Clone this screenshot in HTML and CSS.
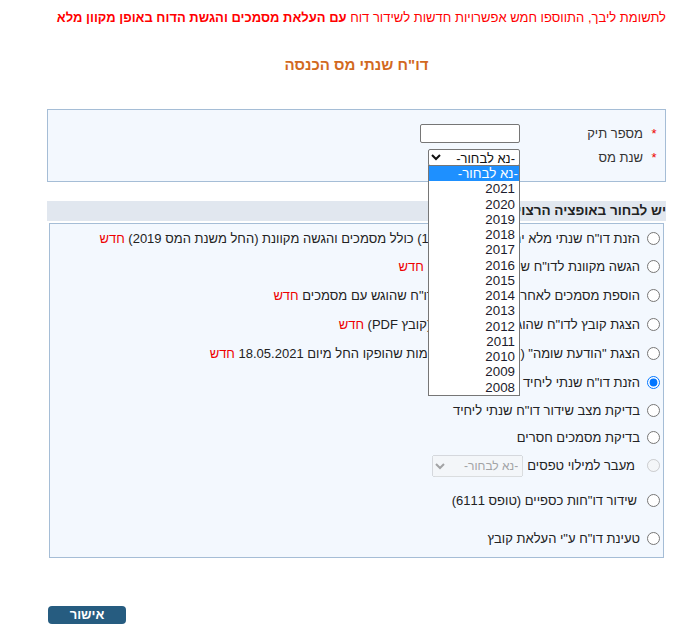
FILE: index.html
```html
<!DOCTYPE html>
<html lang="he" dir="rtl">
<head>
<meta charset="utf-8">
<title>דו"ח שנתי מס הכנסה</title>
<link rel="stylesheet" href="styles.css">
</head>
<body>
<p class="notice">לתשומת ליבך, התווספו חמש אפשרויות חדשות לשידור דוח <b>עם העלאת מסמכים והגשת הדוח באופן מקוון מלא</b></p>
<h1 class="title">דו"ח שנתי מס הכנסה</h1>
<div class="wrap">
  <div class="panel">
    <div class="field">
      <span class="req">*</span>
      <label class="label" for="tik">מספר תיק</label>
      <input class="text-input" id="tik" type="text">
    </div>
    <div class="field">
      <span class="req">*</span>
      <label class="label" for="year">שנת מס</label>
      <div class="select-wrap">
        <select class="year-select" id="year"><option>-נא לבחור-</option></select>
        <ul class="listbox">
          <li class="active">-נא לבחור-</li>
          <li>2021</li><li>2020</li><li>2019</li><li>2018</li><li>2017</li><li>2016</li><li>2015</li><li>2014</li><li>2013</li><li>2012</li><li>2011</li><li>2010</li><li>2009</li><li>2008</li>
        </ul>
      </div>
    </div>
  </div>
  <div class="bar">יש לבחור באופציה הרצויה</div>
  <div class="options">
    <label class="opt h28"><input type="radio" name="o"><span>הזנת דו"ח שנתי מלא יחידים (טופס 1301) כולל מסמכים והגשה מקוונת (החל משנת המס 2019) <em class="new">חדש</em></span></label>
    <label class="opt"><input type="radio" name="o"><span>הגשה מקוונת לדו"ח שנתי שהוזן בטיוטה <em class="new">חדש</em></span></label>
    <label class="opt"><input type="radio" name="o"><span>הוספת מסמכים לאחר הגשה מקוונת לדו"ח שהוגש עם מסמכים <em class="new">חדש</em></span></label>
    <label class="opt"><input type="radio" name="o"><span>הצגת קובץ לדו"ח שהוגש באופן המקוון (קובץ PDF) <em class="new">חדש</em></span></label>
    <label class="opt"><input type="radio" name="o"><span>הצגת "הודעת שומה" (פלט השומה) לשומות שהופקו החל מיום 18.05.2021 <em class="new">חדש</em></span></label>
    <label class="opt"><input type="radio" name="o" checked><span>הזנת דו"ח שנתי ליחיד</span></label>
    <label class="opt h27"><input type="radio" name="o"><span>בדיקת מצב שידור דו"ח שנתי ליחיד</span></label>
    <label class="opt h26"><input type="radio" name="o"><span>בדיקת מסמכים חסרים</span></label>
    <div class="opt h31 indent"><input type="radio" name="o" disabled><span>מעבר למילוי טפסים</span><select class="forms-select" disabled><option>-נא לבחור-</option></select></div>
    <label class="opt h39 indent2"><input type="radio" name="o"><span>שידור דו"חות כספיים (טופס 6111)</span></label>
    <label class="opt h37"><input type="radio" name="o"><span>טעינת דו"ח ע"י העלאת קובץ</span></label>
  </div>
  <div class="actions"><button class="ok" type="button">אישור</button></div>
</div>
</body>
</html>
```
FILE: styles.css
```css
* { box-sizing: border-box; }
body {
  margin: 0;
  font-family: "Liberation Sans", Arial, sans-serif;
  font-size: 13px;
  color: #222;
  background: #fff;
}
.notice {
  margin: 0;
  padding: 10px 22px 0 0;
  line-height: 16px;
  color: #f00;
  font-size: 13px;
}
.notice b { font-weight: bold; }
.title {
  margin: 30px 0 0;
  text-align: center;
  font-size: 15px;
  line-height: 18px;
  font-weight: bold;
  color: #d2691e;
  padding-left: 25px;
}
.wrap {
  margin: 35px 22px 0 47px;
}
.panel {
  background: #f3f8fe;
  border: 1px solid #a5bdd6;
  padding: 14px 0 15px;
  display: flex;
  flex-direction: column;
  gap: 6px;
}
.field {
  display: flex;
  align-items: center;
  height: 19px;
}
.field + .field { height: 17px; }
.req {
  width: 22px;
  text-align: center;
  color: #e00;
  font-size: 13px;
}
.label {
  width: 123px;
  font-size: 13px;
  color: #333;
}
.text-input {
  width: 100px;
  height: 19px;
  border: 1px solid #767676;
  border-radius: 2px;
  background: #fff;
  padding: 0 2px;
  margin: 0;
}
.select-wrap {
  position: relative;
  width: 92px;
  height: 17px;
}
.year-select {
  width: 92px;
  height: 17px;
  margin: 0;
  font-family: "Liberation Sans", Arial, sans-serif;
  font-size: 13px;
  padding: 0;
  border: 1px solid #767676;
  border-radius: 2px;
  background: #fff;
  color: #111;
}
.listbox {
  position: absolute;
  top: 16px;
  right: 0;
  width: 92px;
  margin: 0;
  padding: 0;
  list-style: none;
  background: #fff;
  border: 1px solid #767676;
  z-index: 5;
}
.listbox li {
  height: 15.27px;
  line-height: 15px;
  padding-right: 4px;
  font-size: 13.33px;
  color: #1c1c2c;
}
.listbox li.active {
  background: #1e90ff;
  color: #fff;
  padding-right: 1px;
}
.bar {
  margin-top: 19px;
  height: 20px;
  line-height: 20px;
  background: #e1e7ef;
  font-weight: bold;
  font-size: 13.5px;
  color: #222;
}
.options {
  margin: 2px 2px 0;
  background: #f3f8fe;
  border: 1px solid #a5bdd6;
  display: flex;
  flex-direction: column;
}
.opt {
  display: flex;
  align-items: center;
  height: 29px;
  padding-right: 3px;
  font-size: 13px;
  color: #222;
  white-space: nowrap;
}
.opt input[type="radio"] {
  width: 13px;
  height: 13px;
  margin: 0 0 0 7px;
  flex: none;
}
.opt.h28 { height: 28px; }
.opt.h27 { height: 27px; }
.opt.h26 { height: 26px; }
.opt.h31 { height: 31px; }
.opt.h39 { height: 39px; }
.opt.h37 { height: 37px; }
.opt.indent span { margin-right: 5px; }
.opt.indent2 span { margin-right: 3px; }
.new {
  font-style: normal;
  color: #e00;
}
.forms-select {
  margin: 0 4px 0 0;
  width: 91px;
  height: 22px;
  font-family: "Liberation Sans", Arial, sans-serif;
  font-size: 12px;
}
.actions {
  display: flex;
  justify-content: flex-end;
  margin-top: 48px;
}
.ok {
  width: 78px;
  height: 18px;
  margin-left: 1px;
  background: #265c80;
  color: #fff;
  border: 0;
  border-radius: 4px;
  font-family: "Liberation Sans", Arial, sans-serif;
  font-weight: bold;
  font-size: 13px;
  padding: 0;
  line-height: 18px;
}
```
